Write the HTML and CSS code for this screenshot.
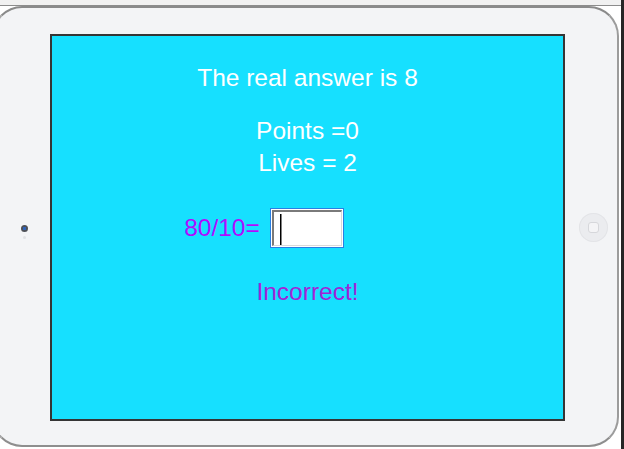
FILE: index.html
```html
<!DOCTYPE html>
<html lang="en">
<head>
<meta charset="utf-8">
<title>Quiz</title>
<link rel="stylesheet" href="styles.css">
</head>
<body>
<div class="topbar"></div>
<div class="stage">
  <div class="device">
    <div class="side side-left">
      <span class="lens"></span>
      <span class="sensor"></span>
    </div>
    <main class="screen">
      <p class="title">The real answer is 8</p>
      <div class="stats">
        <p class="stat">Points =0</p>
        <p class="stat">Lives = 2</p>
      </div>
      <div class="question">
        <span class="prompt">80/10=</span>
        <div class="answer"><span class="field"></span></div>
      </div>
      <p class="feedback">Incorrect!</p>
    </main>
    <div class="side side-right">
      <span class="home"><span class="home-square"></span></span>
    </div>
  </div>
  <div class="edge"></div>
</div>
</body>
</html>
```

FILE: styles.css
```css
html, body {
  margin: 0;
  padding: 0;
  background: #ffffff;
  overflow: hidden;
  width: 624px;
  height: 449px;
}

body {
  font-family: "Liberation Sans", Arial, sans-serif;
}

.topbar {
  box-sizing: border-box;
  height: 6px;
  background: #f1f1f1;
  border-bottom: 1px solid #8c8c8c;
}

.stage {
  display: flex;
  align-items: flex-start;
  gap: 2px;
}

.device {
  box-sizing: border-box;
  margin-left: -8px;
  width: 627px;
  height: 441px;
  padding: 26px 0 24px 0;
  border: 2px solid #a4a4a4;
  border-top-color: #8a8a8a;
  border-bottom-color: #8e8e8e;
  border-right-color: #9c9c9c;
  border-radius: 30px;
  background: #f3f4f6;
  display: flex;
  align-items: stretch;
  flex-shrink: 0;
}

.edge {
  width: 3px;
  height: 449px;
  margin-top: -6px;
  background: #262626;
  flex-shrink: 0;
}

.side {
  display: flex;
  flex-direction: column;
  align-items: center;
  justify-content: center;
  box-sizing: border-box;
  flex-shrink: 0;
}

.side-left {
  width: 56px;
  padding-left: 4px;
  padding-top: 8px;
  gap: 4px;
}

.side-right {
  width: 52px;
  padding-left: 4px;
}

.lens {
  display: block;
  width: 7px;
  height: 7px;
  border-radius: 50%;
  background: radial-gradient(circle, #2f62b8 0 1.5px, #4d5057 2px);
}

.sensor {
  display: block;
  width: 3px;
  height: 3px;
  border-radius: 50%;
  background: #e1e2e5;
}

.home {
  display: flex;
  align-items: center;
  justify-content: center;
  width: 29px;
  height: 29px;
  border-radius: 50%;
  background: #ebecef;
  box-shadow: inset 0 0 0 1px #e3e4e7;
}

.home-square {
  display: block;
  width: 9px;
  height: 9px;
  border: 1px solid #d6d7db;
  border-radius: 3px;
  background: #f4f4f6;
}

.screen {
  box-sizing: border-box;
  width: 515px;
  flex-shrink: 0;
  background: #16e0ff;
  border: 2px solid #353535;
  padding-top: 28px;
  display: flex;
  flex-direction: column;
  align-items: center;
  font-size: 24.5px;
  color: #ffffff;
}

.title {
  margin: 0;
  line-height: 28px;
}

.stats {
  margin-top: 23px;
  line-height: 32px;
  text-align: center;
}

.stat {
  margin: 0;
}

.question {
  margin-top: 29px;
  align-self: stretch;
  display: flex;
  justify-content: center;
  align-items: center;
  gap: 10px;
  padding-right: 87px;
  height: 40px;
}

.prompt {
  color: #b10cff;
  line-height: 28px;
}

.answer {
  box-sizing: border-box;
  width: 74px;
  height: 40px;
  border: 1px solid #2a7fe2;
  padding: 1px;
  background: #ffffff;
}

.field {
  display: block;
  box-sizing: border-box;
  width: 100%;
  height: 100%;
  border: 1px solid #d9d9d9;
  border-top: 2px solid #7a7a7a;
  border-left: 2px solid #7a7a7a;
  background:
    linear-gradient(#000000, #000000) 6px 2px / 1.5px 31px no-repeat,
    #ffffff;
}

.feedback {
  margin: 30px 0 0;
  line-height: 28px;
  color: #a224d6;
}
```
